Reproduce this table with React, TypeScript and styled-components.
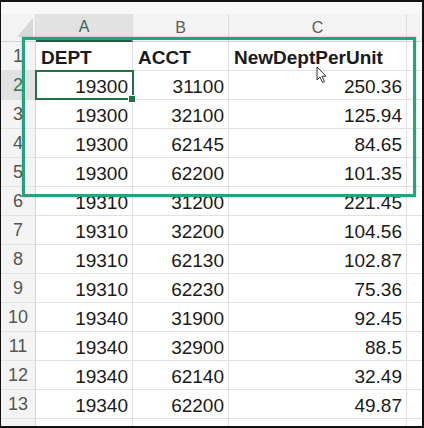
import React from "react";
import styled, { createGlobalStyle } from "styled-components";

const GlobalStyle = createGlobalStyle`
  html, body { margin: 0; padding: 0; background: #ffffff; }
  body { font-family: "Liberation Sans", Arial, sans-serif; }
`;

const Frame = styled.div`
  position: relative;
  width: 424px;
  height: 428px;
  box-sizing: border-box;
  border-style: solid;
  border-color: #111;
  border-width: 2px 2px 2px 1px;
  background: #ffffff;
  overflow: hidden;
  display: flex;
  flex-direction: column;
`;

const TopStrip = styled.div`
  height: 12px;
  flex: none;
  background: #f7f7f7;
`;

const Sheet = styled.div`
  display: grid;
  grid-template-columns: 35px 97px 96px 178px 60px;
  grid-template-rows: 28px;
  grid-auto-rows: 29px;
`;

const Corner = styled.div`
  position: relative;
  background: #f3f3f3;
  border-right: 1px solid #dcdcdc;
  border-bottom: 1px solid #d4d4d4;
  box-sizing: border-box;
  &::after {
    content: "";
    position: absolute;
    right: 2px;
    bottom: 4px;
    width: 0;
    height: 0;
    border-left: 16px solid transparent;
    border-bottom: 19px solid #d7d7d7;
  }
`;

const ColHeader = styled.div<{ $selected?: boolean }>`
  box-sizing: border-box;
  display: flex;
  align-items: flex-end;
  justify-content: center;
  padding-bottom: 4px;
  font-size: 16px;
  color: ${(p) => (p.$selected ? "#3b6650" : "#5c5c5c")};
  background: ${(p) => (p.$selected ? "#e2e2e2" : "#f3f3f3")};
  border-right: 1px solid #dcdcdc;
  border-bottom: ${(p) => (p.$selected ? "2px solid #245c40" : "1px solid #d4d4d4")};
`;

const RowHeader = styled.div<{ $selected?: boolean }>`
  box-sizing: border-box;
  display: flex;
  align-items: flex-end;
  justify-content: center;
  padding-bottom: 3px;
  font-size: 18px;
  color: ${(p) => (p.$selected ? "#2f7a5a" : "#555555")};
  background: ${(p) => (p.$selected ? "#e2e2e2" : "#f4f4f4")};
  border-right: 1px solid #d4d4d4;
  border-bottom: 1px solid #e2e2e2;
`;

const Cell = styled.div<{ $align?: "left" | "right"; $bold?: boolean; $active?: boolean }>`
  position: relative;
  box-sizing: border-box;
  display: flex;
  align-items: flex-end;
  justify-content: ${(p) => (p.$align === "right" ? "flex-end" : "flex-start")};
  padding: 0 4px 1px 5px;
  font-size: 19px;
  font-weight: ${(p) => (p.$bold ? 700 : 400)};
  color: #1a1a1a;
  white-space: nowrap;
  border-right: 1px solid #e1e1e1;
  border-bottom: 1px solid #e1e1e1;
  ${(p) =>
    p.$active
      ? `
    &::after {
      content: "";
      position: absolute;
      top: -1px;
      left: -1px;
      right: -2px;
      bottom: -1px;
      border: 2px solid #217346;
      z-index: 2;
    }
    &::before {
      content: "";
      position: absolute;
      right: -3px;
      bottom: -3px;
      width: 6px;
      height: 6px;
      background: #217346;
      box-shadow: 0 0 0 1px #ffffff;
      z-index: 3;
    }
  `
      : ""}
`;

const Highlight = styled.div`
  position: absolute;
  left: 21px;
  top: 35px;
  width: 394px;
  height: 160px;
  box-sizing: border-box;
  border: 3px solid #22a47e;
  box-shadow: 0 0 2px rgba(0, 0, 0, 0.25);
  z-index: 5;
  pointer-events: none;
`;

const Cursor = styled.svg`
  position: absolute;
  left: 315px;
  top: 64px;
  z-index: 6;
`;

const rows: [string, string, string][] = [
  ["19300", "31100", "250.36"],
  ["19300", "32100", "125.94"],
  ["19300", "62145", "84.65"],
  ["19300", "62200", "101.35"],
  ["19310", "31200", "221.45"],
  ["19310", "32200", "104.56"],
  ["19310", "62130", "102.87"],
  ["19310", "62230", "75.36"],
  ["19340", "31900", "92.45"],
  ["19340", "32900", "88.5"],
  ["19340", "62140", "32.49"],
  ["19340", "62200", "49.87"],
];

export default function App() {
  return (
    <>
      <GlobalStyle />
      <Frame>
        <TopStrip />
        <Sheet>
          <Corner />
          <ColHeader $selected>A</ColHeader>
          <ColHeader>B</ColHeader>
          <ColHeader>C</ColHeader>
          <ColHeader />

          <RowHeader>1</RowHeader>
          <Cell $bold>DEPT</Cell>
          <Cell $bold>ACCT</Cell>
          <Cell $bold>NewDeptPerUnit</Cell>
          <Cell />

          {rows.map((r, i) => (
            <React.Fragment key={i}>
              <RowHeader $selected={i === 0}>{i + 2}</RowHeader>
              <Cell $align="right" $active={i === 0}>{r[0]}</Cell>
              <Cell $align="right">{r[1]}</Cell>
              <Cell $align="right">{r[2]}</Cell>
              <Cell />
            </React.Fragment>
          ))}
          <RowHeader />
          <Cell />
          <Cell />
          <Cell />
          <Cell />
        </Sheet>
        <Highlight />
        <Cursor width="12" height="18" viewBox="0 0 12 18">
          <path
            d="M1 1 L1 14 L4 11 L6.5 16.5 L8.5 15.6 L6 10.2 L10 10.2 Z"
            fill="#ffffff"
            stroke="#333333"
            strokeWidth="1"
            strokeLinejoin="round"
          />
        </Cursor>
      </Frame>
    </>
  );
}
